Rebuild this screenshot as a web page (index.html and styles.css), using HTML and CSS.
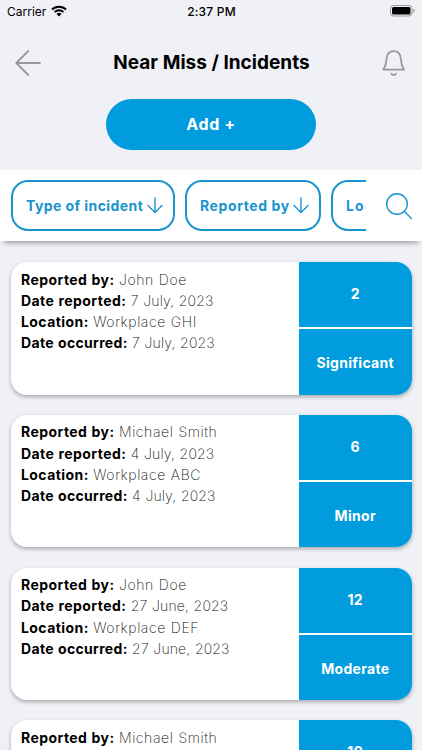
FILE: index.html
```
<!DOCTYPE html>
<html lang="en">
<head>
    <meta charset="UTF-8">
    <meta name="viewport" content="width=device-width, initial-scale=1.0">
    <title>Near Miss / Incidents</title>
    <link rel="stylesheet" href="styles.css">
</head>

<body>
    <div class="status">
        <div class="carrier">
            <span>Carrier</span>
            <svg width="16" height="12" viewBox="0 0 16 12">
                <path d="M1 4.5a10 10 0 0 1 14 0M3.5 7.1a6.4 6.4 0 0 1 9 0" fill="none" stroke="#000" stroke-width="2"/>
                <path d="M8 11.5L5.5 8.9a3.6 3.6 0 0 1 5 0z"/>
            </svg>
        </div>
        <div class="time">2:37 PM</div>
        <svg class="battery" width="26" height="12" viewBox="0 0 26 12">
            <rect x="0.5" y="0.5" width="21.5" height="10.5" rx="3" fill="none" stroke="#999"/>
            <rect x="2" y="2" width="18.5" height="7.5" rx="1.5"/>
            <path d="M23.3 3.8a2.2 2.2 0 0 1 0 4z" fill="#888"/>
        </svg>
    </div>

    <div class="header">
        <svg width="28" height="28" viewBox="0 0 28 28" class="icon_grey">
            <path d="M14.3 2L2.3 14l12 12M2.3 14H26"/>
        </svg>
        <h1>Near Miss / Incidents</h1>
        <svg width="26" height="28" viewBox="0 0 26 28" class="icon_grey bell">
            <path d="M2.3 20.6C4.8 17.5 5 15 5.4 10.5C5.8 5 8.5 2.2 12.7 2.2S19.600 5 20 10.500C20.400 15 20.600 17.500 23.100 20.600z"/>
            <path d="M10.400 24.800q2.300 2.400 4.600 0"/>
        </svg>
    </div>

    <button class="btn_add">Add +</button>

    <div class="filters">
        <div class="chips">
            <div class="chip type">
                <span>Type of incident</span>
                <svg width="16" height="17" viewBox="0 0 16 17"><path d="M8 1v14.5M1 8.5l7 7l7-7"/></svg>
            </div>
            <div class="chip reported">
                <span>Reported by</span>
                <svg width="16" height="17" viewBox="0 0 16 17"><path d="M8 1v14.5M1 8.5l7 7l7-7"/></svg>
            </div>
            <div class="chip location">
                <span>Location</span>
            </div>
        </div>
        <svg class="search" width="28" height="28" viewBox="0 0 28 28">
            <circle cx="12" cy="12" r="10.3"/>
            <path d="M19.3 19.3L26.4 26.4"/>
        </svg>
    </div>

    <div class="list">
        <div class="card">
            <div class="info">
                <div><b>Reported by:</b> <span class="name">John Doe</span></div>
                <div><b>Date reported:</b> <span>7 July, 2023</span></div>
                <div><b>Location:</b> <span class="name">Workplace GHI</span></div>
                <div><b class="occurred">Date occurred:</b> <span>7 July, 2023</span></div>
            </div>
            <div class="risk">
                <div class="score">2</div>
                <div class="level">Significant</div>
            </div>
        </div>
        <div class="card">
            <div class="info">
                <div><b>Reported by:</b> <span class="name">Michael Smith</span></div>
                <div><b>Date reported:</b> <span>4 July, 2023</span></div>
                <div><b>Location:</b> <span class="name">Workplace ABC</span></div>
                <div><b class="occurred">Date occurred:</b> <span>4 July, 2023</span></div>
            </div>
            <div class="risk">
                <div class="score">6</div>
                <div class="level">Minor</div>
            </div>
        </div>
        <div class="card">
            <div class="info">
                <div><b>Reported by:</b> <span class="name">John Doe</span></div>
                <div><b>Date reported:</b> <span>27 June, 2023</span></div>
                <div><b>Location:</b> <span class="name">Workplace DEF</span></div>
                <div><b class="occurred">Date occurred:</b> <span>27 June, 2023</span></div>
            </div>
            <div class="risk">
                <div class="score">12</div>
                <div class="level">Moderate</div>
            </div>
        </div>
        <div class="card">
            <div class="info">
                <div><b>Reported by:</b> <span class="name">Michael Smith</span></div>
            </div>
            <div class="risk">
                <div class="score">10</div>
                <div class="level"></div>
            </div>
        </div>
    </div>
</body>
</html>
```
FILE: styles.css
```
* {
    box-sizing: border-box;
}

body {
    margin: 0;
    width: 422px;
    height: 750px;
    overflow: hidden;
    background-color: #f0f1f6;
    color: #000;
    font-family: Inter, "Liberation Sans", sans-serif;
}

svg {
    display: block;
    flex-shrink: 0;
}

.status {
    display: grid;
    grid-template-columns: 1fr auto 1fr;
    align-items: center;
    height: 22px;
    padding: 0 6px 0 7px;
    font-size: 12px;
}

.carrier {
    display: flex;
    align-items: center;
    gap: 5px;
}

.time {
    font-weight: 500;
    letter-spacing: 0.2px;
}

.battery {
    justify-self: end;
}

.header {
    display: flex;
    align-items: center;
    justify-content: space-between;
    height: 77px;
    padding: 5px 15px 0 14px;
}

.header h1 {
    margin: 0;
    font-size: 19px;
    font-weight: 700;
    line-height: 24px;
    letter-spacing: 0.03px;
}

.icon_grey {
    fill: none;
    stroke: #999;
    stroke-width: 1.8;
    stroke-linecap: round;
    stroke-linejoin: round;
}

.btn_add {
    display: block;
    width: 210px;
    height: 51px;
    margin: 0 auto 20px;
    padding: 0 0 1px;
    border: none;
    border-radius: 26px;
    background-color: #009cdd;
    color: #fff;
    font: 700 16px Inter, sans-serif;
    letter-spacing: 0.6px;
}

.filters {
    position: relative;
    display: flex;
    align-items: center;
    justify-content: space-between;
    height: 71px;
    padding: 0 9px 0 10.5px;
    background-color: #fff;
    box-shadow: 0 6px 5px -4px rgba(0, 0, 0, 0.35);
}

.chips {
    display: flex;
    gap: 10px;
    width: 355.5px;
    overflow: hidden;
}

.chip {
    display: flex;
    align-items: center;
    justify-content: space-between;
    flex-shrink: 0;
    height: 51px;
    padding: 0 10px 0 13.5px;
    border: 2px solid #1a94cf;
    border-radius: 17px;
    color: #1a94cf;
    font-size: 14px;
    font-weight: 700;
    letter-spacing: 0.43px;
    white-space: nowrap;
}

.chip svg,
.search {
    fill: none;
    stroke: #1a94cf;
    stroke-width: 1.4;
    stroke-linecap: round;
    stroke-linejoin: round;
}

.type {
    width: 164px;
}

.reported {
    width: 136px;
    letter-spacing: 0.6px;
}

.location {
    width: 120px;
    letter-spacing: 1.2px;
}

.list {
    display: flex;
    flex-direction: column;
    gap: 20.25px;
    height: 509px;
    padding: 21px 10.5px 0;
    overflow: hidden;
}

.card {
    display: flex;
    flex-shrink: 0;
    height: 132.5px;
    border-radius: 16px;
    background-color: #fff;
    box-shadow: 0 2px 4px rgba(0, 0, 0, 0.3);
}

.info {
    flex: 1;
    padding: 6.5px 10.5px;
    font-size: 14px;
    line-height: 21.3px;
    font-weight: 200;
    word-spacing: 0.5px;
    white-space: nowrap;
}

.info b {
    font-weight: 700;
    letter-spacing: 0.43px;
}

.info .occurred {
    letter-spacing: 0.32px;
}

.info span {
    color: #111;
    letter-spacing: 0.15px;
}

.info .name {
    letter-spacing: 0.58px;
}

.risk {
    display: grid;
    grid-template-rows: 1fr 1fr;
    gap: 2px;
    width: 112.5px;
    border-radius: 0 16px 16px 0;
    overflow: hidden;
    color: #fff;
    font-size: 14px;
    font-weight: 700;
    letter-spacing: 0.3px;
}

.risk div {
    display: flex;
    align-items: center;
    justify-content: center;
    background-color: #009cdd;
}

.score {
    padding-bottom: 2px;
}

.level {
    padding-top: 2px;
}
```
